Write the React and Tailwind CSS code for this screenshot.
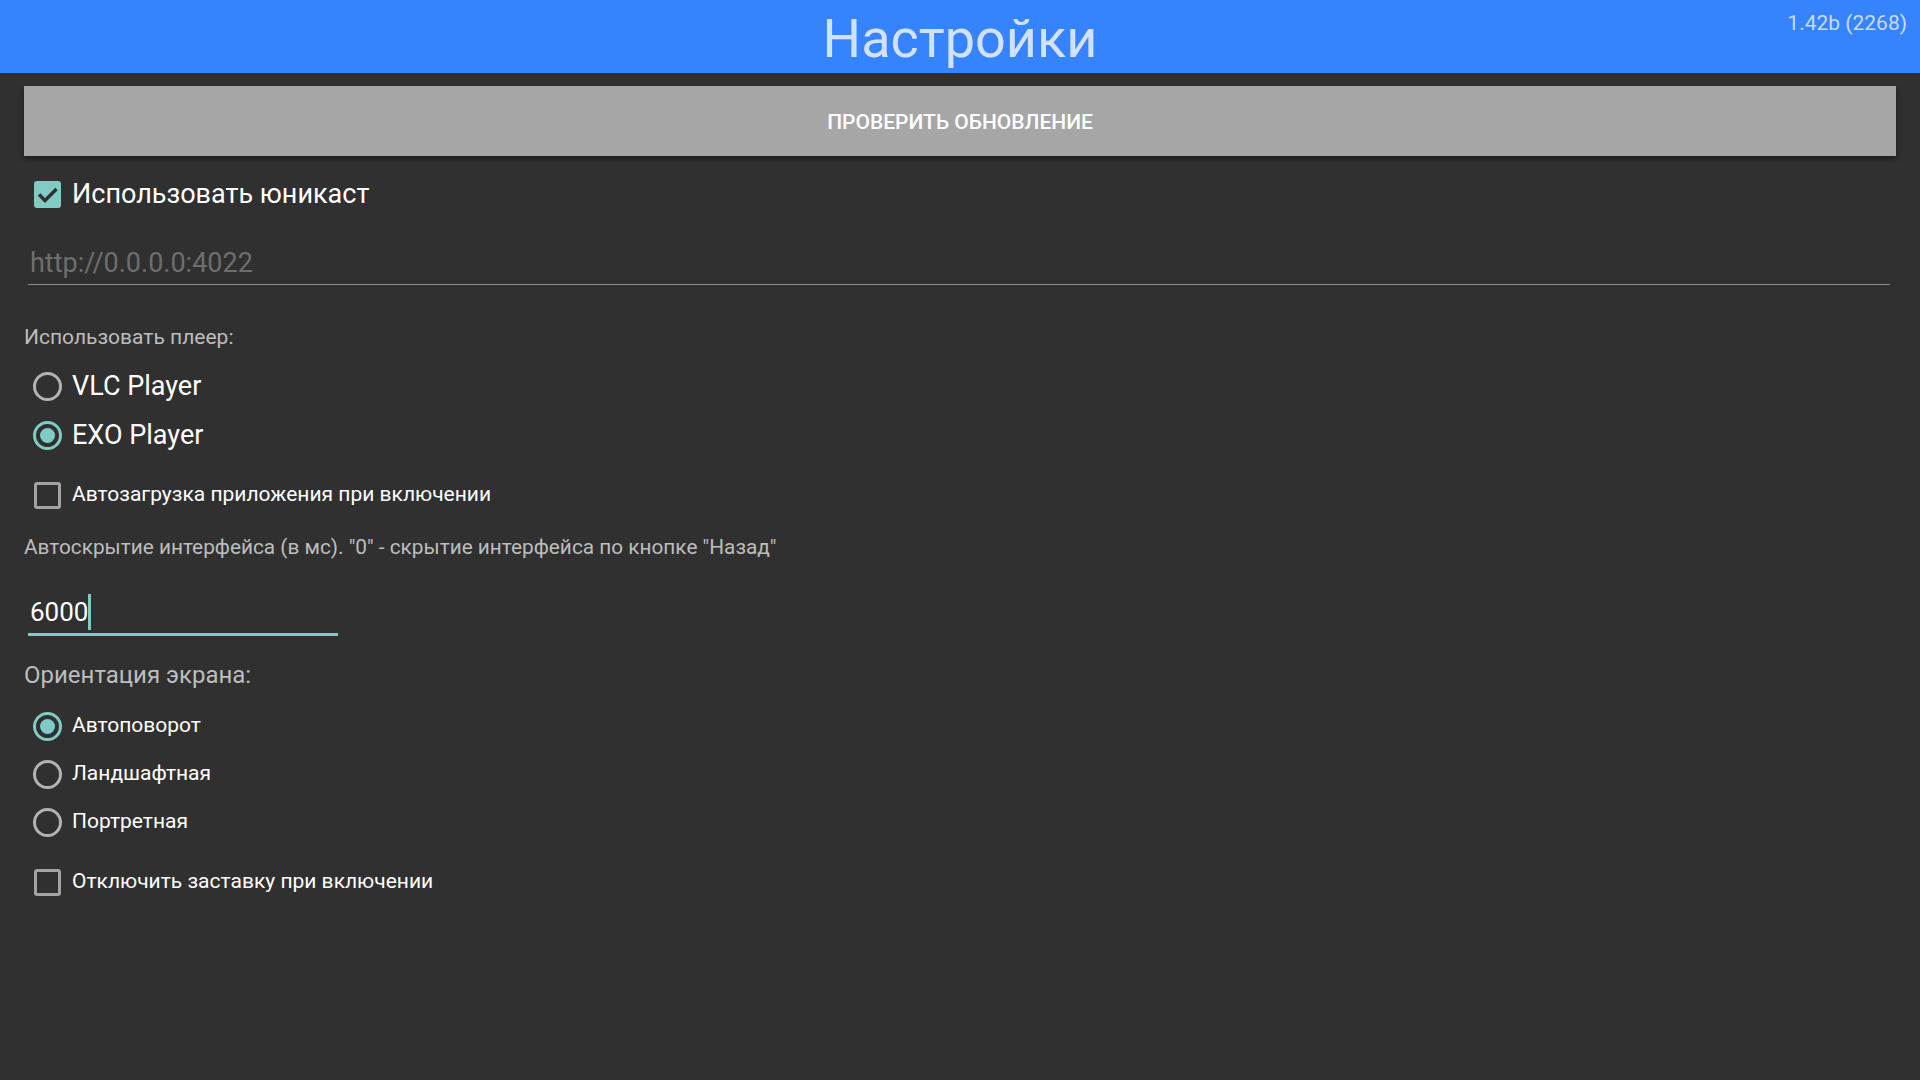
import React from 'react';

const font = { fontFamily: 'Roboto, "Noto Sans", sans-serif' };

const CheckBox = ({ checked }) =>
    checked ? (
        <div className="w-[27px] h-[27px] rounded-[3px] bg-[#80cbc4] flex items-center justify-center shrink-0">
            <svg width="27" height="27" viewBox="0 0 27 27">
                <path d="M5 13.5l6 6L22.5 8" fill="none" stroke="#303030" strokeWidth="3.5" />
            </svg>
        </div>
    ) : (
        <div className="w-[27px] h-[27px] rounded-[3px] border-[3px] border-[#a3a3a3] shrink-0"></div>
    );

const Radio = ({ checked }) =>
    checked ? (
        <div className="w-[29px] h-[29px] rounded-full border-[3.5px] border-[#80cbc4] flex items-center justify-center shrink-0">
            <div className="w-[15px] h-[15px] rounded-full bg-[#80cbc4]"></div>
        </div>
    ) : (
        <div className="w-[29px] h-[29px] rounded-full border-[3px] border-[#b3b3b3] shrink-0"></div>
    );

const Row = ({ children, control, big, className = '' }) => (
    <div className={`h-[48px] flex items-center pl-[9px] ${className}`}>
        <div className="w-[29px] flex items-center justify-center">{control}</div>
        <span className={`ml-[10px] text-white ${big ? 'text-[27px]' : 'text-[21px]'}`}>{children}</span>
    </div>
);

export default function App() {
    return (
        <div className="min-h-screen w-full bg-[#303030]" style={font}>
            <header className="relative h-[73px] bg-[#3584fe] flex items-center justify-center">
                <h1 className="mt-[5px] text-[54px] leading-none text-[#d2e1ff]">Настройки</h1>
                <span className="absolute right-[13px] top-[8px] text-[21px] text-[#c8dbff]">1.42b (2268)</span>
            </header>

            <main className="px-[24px] pt-[13px]">
                <button className="w-full h-[70px] pt-[4px] bg-[#a6a6a6] text-white text-[21px] font-medium uppercase shadow-[0_3px_5px_rgba(0,0,0,0.4)]">
                    Проверить обновление
                </button>

                <Row className="mt-[14px]" big control={<CheckBox checked />}>Использовать юникаст</Row>

                <div className="mt-[28px] ml-[4px] mr-[6px] pb-[4px] border-b border-[#8c8c8c]">
                    <div className="h-[34px] leading-[34px] pl-[2px] text-[27px] text-[#6e6e6e]">http://0.0.0.0:4022</div>
                </div>

                <div className="mt-[39px] h-[26px] leading-[26px] text-[21px] text-[#bdbdbd]">Использовать плеер:</div>

                <Row className="mt-[12px]" big control={<Radio />}>VLC Player</Row>
                <Row className="mt-[1px]" big control={<Radio checked />}>EXO Player</Row>

                <Row className="mt-[12px]" control={<CheckBox />}>Автозагрузка приложения при включении</Row>

                <div className="mt-[15px] h-[26px] leading-[26px] text-[20.8px] text-[#bdbdbd]">
                    Автоскрытие интерфейса (в мс). "0" - скрытие интерфейса по кнопке "Назад"
                </div>

                <div className="mt-[34px] ml-[4px] w-[310px] pb-[3px] border-b-[3px] border-[#80cbc4]">
                    <div className="h-[36px] leading-[36px] pl-[2px] text-[26px] text-white flex items-center">
                        6000<span className="inline-block w-[3px] h-[36px] bg-[#80cbc4]"></span>
                    </div>
                </div>

                <div className="mt-[25px] h-[28px] leading-[28px] text-[24px] text-[#bdbdbd]">Ориентация экрана:</div>

                <Row className="mt-[13px]" control={<Radio checked />}>Автоповорот</Row>
                <Row control={<Radio />}>Ландшафтная</Row>
                <Row control={<Radio />}>Портретная</Row>

                <Row className="mt-[12px]" control={<CheckBox />}>Отключить заставку при включении</Row>
            </main>
        </div>
    );
}
